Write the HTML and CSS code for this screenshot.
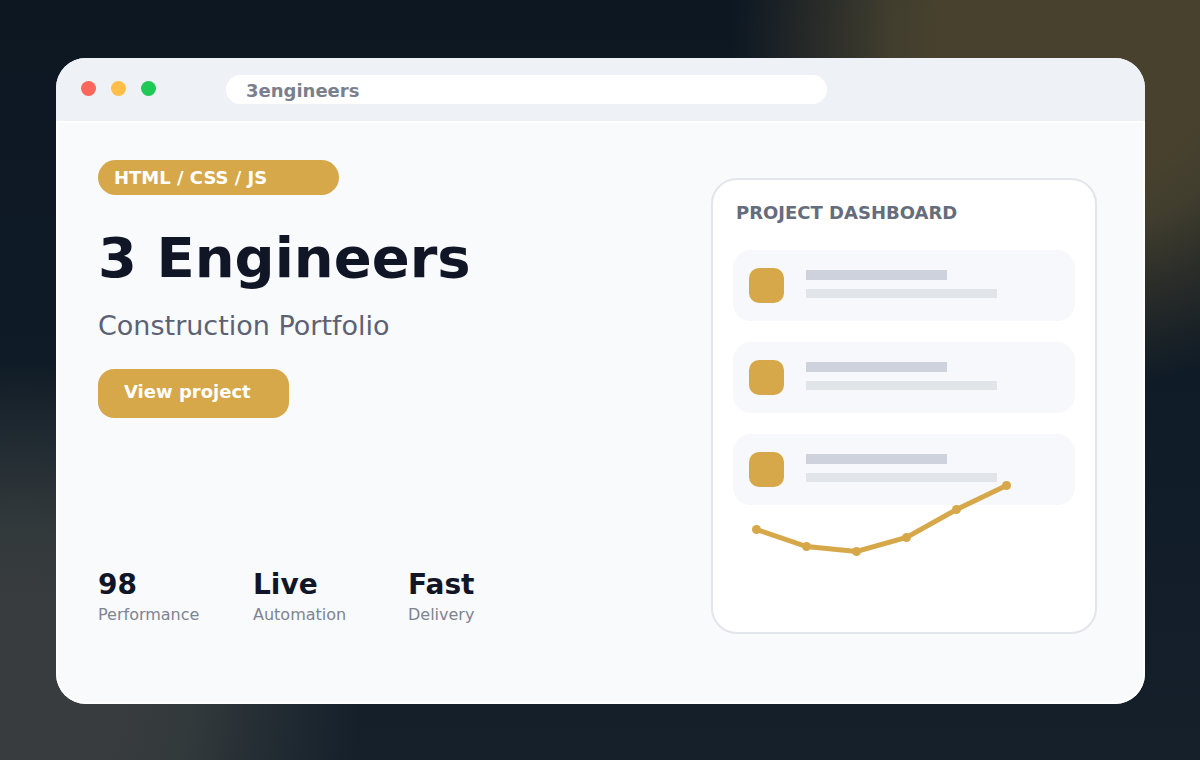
FILE: index.html
```html
<!DOCTYPE html>
<html lang="en">
<head>
    <meta charset="UTF-8">
    <meta name="viewport" content="width=device-width, initial-scale=1.0">
    <title>3 Engineers - Construction Portfolio</title>
    <link rel="stylesheet" href="styles.css">
</head>
<body>
    <div class="window">
        <!-- Browser bar -->
        <header class="topbar">
            <div class="dots">
                <span class="dot red"></span>
                <span class="dot yellow"></span>
                <span class="dot green"></span>
            </div>
            <input class="address" type="text" value="3engineers" aria-label="Address">
        </header>

        <main class="content">
            <!-- Intro -->
            <section class="intro">
                <span class="badge">HTML / CSS / JS</span>
                <h1>3 Engineers</h1>
                <p class="subtitle">Construction Portfolio</p>
                <button class="btn" type="button">View project</button>

                <div class="stats">
                    <div class="stat">
                        <strong>98</strong>
                        <span>Performance</span>
                    </div>
                    <div class="stat">
                        <strong>Live</strong>
                        <span>Automation</span>
                    </div>
                    <div class="stat">
                        <strong>Fast</strong>
                        <span>Delivery</span>
                    </div>
                </div>
            </section>

            <!-- Dashboard -->
            <section class="dashboard">
                <h2>PROJECT DASHBOARD</h2>
                <div class="row">
                    <div class="row-icon"></div>
                    <div class="row-lines">
                        <div class="line"></div>
                        <div class="line long"></div>
                    </div>
                </div>
                <div class="row">
                    <div class="row-icon"></div>
                    <div class="row-lines">
                        <div class="line"></div>
                        <div class="line long"></div>
                    </div>
                </div>
                <div class="row">
                    <div class="row-icon"></div>
                    <div class="row-lines">
                        <div class="line"></div>
                        <div class="line long"></div>
                    </div>
                </div>
                <svg class="chart" width="260" height="76" viewBox="0 0 260 76" aria-hidden="true">
                    <polyline points="5.5,49.5 55.5,66.5 105.5,71.5 155.5,57.5 205.5,29.5 255.5,5.5"/>
                    <circle cx="5.5" cy="49.5" r="4.5"/>
                    <circle cx="55.5" cy="66.5" r="4.5"/>
                    <circle cx="105.5" cy="71.5" r="4.5"/>
                    <circle cx="155.5" cy="57.5" r="4.5"/>
                    <circle cx="205.5" cy="29.5" r="4.5"/>
                    <circle cx="255.5" cy="5.5" r="4.5"/>
                </svg>
            </section>
        </main>
    </div>
</body>
</html>
```
FILE: styles.css
```css
:root {
    --gold: #d6a84a;
    --dark: #111627;
    --page: #f8fafc;
    --bar: #eef1f6;
}

* {
    box-sizing: border-box;
}

body {
    font-family: 'DejaVu Sans', sans-serif;
    margin: 0;
    padding: 58px 55px 56px 56px;
    min-height: 100vh;
    display: flex;
    color: var(--dark);
    background:
        radial-gradient(circle at 1080px 40px, #48412e 140px, #413e2e 190px, #2b2d29 255px, #14202600 350px),
        radial-gradient(circle at 20px 700px, #393c3e 80px, #333a3c 170px, #252e34 240px, #15202c00 340px),
        linear-gradient(#0c1722, #0f1b26 50%, #15202b);
}

.window {
    flex: 1;
    display: flex;
    flex-direction: column;
    background: var(--page);
    border-radius: 30px;
    overflow: hidden;
}

/* Browser bar */
.topbar {
    display: flex;
    align-items: center;
    gap: 70px;
    height: 63px;
    padding: 0 25px;
    background: var(--bar);
}

.dots {
    display: flex;
    gap: 15px;
    padding-bottom: 2px;
}

.dot {
    width: 15px;
    height: 15px;
    border-radius: 50%;
}

.red {
    background: #ff665b;
}

.yellow {
    background: #ffbf47;
}

.green {
    background: #1fc956;
}

.address {
    width: 601px;
    height: 29px;
    padding: 2px 20px 0;
    border: none;
    border-radius: 15px;
    background: white;
    color: #7a7f8d;
    font: bold 18px 'DejaVu Sans', sans-serif;
}

.content {
    flex: 1;
    display: flex;
    justify-content: space-between;
    padding: 0 48px 0 42px;
    border: 2px solid white;
    border-width: 2px 0;
    box-shadow: inset 2px 0 white, inset -2px 0 white;
    border-radius: 0 0 30px 30px;
}

/* Intro */
.intro {
    display: flex;
    flex-direction: column;
    align-items: flex-start;
    padding: 37px 0 77px;
}

.badge {
    width: 241px;
    padding: 0 16px;
    border-radius: 18px;
    background: var(--gold);
    color: white;
    font-size: 18px;
    font-weight: bold;
    line-height: 35px;
}

h1 {
    margin: 31px 0 0;
    font-size: 56px;
    line-height: 64px;
}

.subtitle {
    margin: 20px 0 27px;
    font-size: 27px;
    line-height: 32px;
    color: #5c6274;
}

.btn {
    width: 191px;
    height: 49px;
    padding: 0 26px 4px;
    border: none;
    border-radius: 16px;
    background: var(--gold);
    color: white;
    font: bold 18px 'DejaVu Sans', sans-serif;
    text-align: left;
    white-space: nowrap;
    cursor: pointer;
}

.stats {
    display: grid;
    grid-template-columns: repeat(3, 155px);
    margin-top: auto;
}

.stat {
    display: flex;
    flex-direction: column;
    gap: 4px;
}

.stat strong {
    font-size: 28px;
    line-height: 32px;
}

.stat span {
    font-size: 16px;
    line-height: 20px;
    color: #7e8492;
}

/* Dashboard */
.dashboard {
    position: relative;
    display: flex;
    flex-direction: column;
    gap: 21px;
    width: 386px;
    margin: 55px 0 68px;
    padding: 20px;
    border: 2px solid #e2e5ea;
    border-radius: 26px;
    background: white;
}

h2 {
    margin: 0 3px 3px;
    font-size: 18px;
    line-height: 26px;
    color: #656c7b;
}

.row {
    display: flex;
    align-items: center;
    gap: 22px;
    height: 71px;
    padding: 0 16px;
    border-radius: 18px;
    background: #f6f8fb;
}

.row-icon {
    width: 35px;
    height: 35px;
    border-radius: 10px;
    background: var(--gold);
}

.row-lines {
    display: grid;
    gap: 9px;
    padding-bottom: 3px;
}

.line {
    width: 141px;
    height: 10px;
    background: #cdd2dd;
}

.line.long {
    width: 191px;
    height: 9px;
    background: #e1e4e9;
}

/* Trend line drawn over the last row */
.chart {
    position: absolute;
    left: 38px;
    bottom: 76px;
    fill: var(--gold);
}

.chart polyline {
    fill: none;
    stroke: var(--gold);
    stroke-width: 5;
}
```
